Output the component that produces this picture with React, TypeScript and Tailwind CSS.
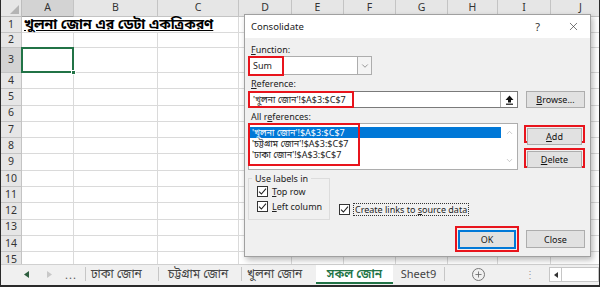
import { ChevronDown, ChevronUp, Plus, X } from 'lucide-react'

const FONT = "font-['Noto_Sans','Noto_Sans_Bengali','Lohit_Bengali','Vrinda',sans-serif]"

const COLS = [
  { name: 'A', w: 'w-[52px]' },
  { name: 'B', w: 'w-[84px]' },
  { name: 'C', w: 'w-[81px]' },
  { name: 'D', w: 'w-[53px]' },
  { name: 'E', w: 'w-[52px]' },
  { name: 'F', w: 'w-[52px]' },
  { name: 'G', w: 'w-[52px]' },
  { name: 'H', w: 'w-[50px]' },
  { name: 'I', w: 'w-[53px]' },
  { name: 'J', w: 'w-[60px]' },
]

const ROWS = [
  { n: 1, h: 'h-[16px]' },
  { n: 2, h: 'h-[15px]' },
  { n: 3, h: 'h-[25px]' },
  { n: 4, h: 'h-[16.3px]' },
  { n: 5, h: 'h-[16.3px]' },
  { n: 6, h: 'h-[16.3px]' },
  { n: 7, h: 'h-[16.3px]' },
  { n: 8, h: 'h-[16.3px]' },
  { n: 9, h: 'h-[16.3px]' },
  { n: 10, h: 'h-[16.3px]' },
  { n: 11, h: 'h-[16.3px]' },
  { n: 12, h: 'h-[16.3px]' },
  { n: 13, h: 'h-[16.3px]' },
  { n: 14, h: 'h-[16.3px]' },
  { n: 15, h: 'h-[16px]' },
]

const REFS = [
  "'খুলনা জোন'!$A$3:$C$7",
  "'চট্টগ্রাম জোন'!$A$3:$C$7",
  "'ঢাকা জোন'!$A$3:$C$7",
]

function Check() {
  return (
    <span className="w-[11px] h-[11px] border border-[#333] bg-white flex items-center justify-center shrink-0">
      <svg width="9" height="9" viewBox="0 0 9 9">
        <path d="M1 4.6 L3.4 7 L8 1.6" fill="none" stroke="#222" strokeWidth="1.1" />
      </svg>
    </span>
  )
}

function Btn({ children, className = '' }: { children: React.ReactNode; className?: string }) {
  return (
    <div className={`h-[17px] bg-[#e1e1e1] border border-[#adadad] flex items-center justify-center text-[#111] ${className}`}>
      {children}
    </div>
  )
}

function Sheet() {
  return (
    <div className="h-[264px] overflow-hidden bg-white">
      {/* column headers */}
      <div className="flex h-[17px]">
        <div className="w-[21px] shrink-0 bg-[#e6e6e6] border-r border-b border-[#bdbdbd] relative">
          <svg className="absolute right-[2px] bottom-[2px]" width="9" height="9" viewBox="0 0 9 9">
            <path d="M9 0 L9 9 L0 9 Z" fill="#b4b4b4" />
          </svg>
        </div>
        {COLS.map(c => (
          <div
            key={c.name}
            className={`${c.w} shrink-0 border-r border-b border-[#c4c4c4] flex items-center justify-center text-[10.5px] text-[#333] ${
              c.name === 'A' ? 'bg-[#d3d3d3] border-b-[#9c9c9c]' : 'bg-[#e6e6e6]'
            }`}
          >
            {c.name}
          </div>
        ))}
      </div>
      {ROWS.map(r => (
        <div key={r.n} className={`flex ${r.h}`}>
          <div
            className={`w-[21px] shrink-0 border-r border-b border-[#c4c4c4] flex items-center justify-center text-[10.5px] text-[#333] ${
              r.n === 3 ? 'bg-[#d3d3d3]' : 'bg-[#e6e6e6]'
            }`}
          >
            {r.n}
          </div>
          {COLS.map(c => {
            const hideRight = r.n === 1 && (c.name === 'A' || c.name === 'B')
            return (
              <div
                key={c.name}
                className={`${c.w} shrink-0 border-b border-[#dadada] relative ${hideRight ? '' : 'border-r'}`}
              >
                {r.n === 1 && c.name === 'A' && (
                  <span className="absolute left-[2px] top-[-2px] z-10 whitespace-nowrap text-[14px] font-bold underline text-black leading-[18px]">
                    খুলনা জোন এর ডেটা একত্রিকরণ
                  </span>
                )}
                {r.n === 3 && c.name === 'A' && (
                  <div className="absolute left-[-1px] top-[-1px] right-[-1px] bottom-[-1px] border-2 border-[#217346] z-10">
                    <span className="absolute right-[-4px] bottom-[-4px] w-[5px] h-[5px] bg-[#217346] border border-white" />
                  </div>
                )}
              </div>
            )
          })}
        </div>
      ))}
    </div>
  )
}

function Tabs() {
  const sep = <span className="w-px h-[14px] bg-[#c6c6c6] shrink-0" />
  return (
    <div className="h-[21px] bg-[#f0f0f0] border-t border-[#d0d0d0] flex items-start text-[12px] text-[#444]">
      <div className="w-[84px] h-[18px] flex items-center shrink-0">
        <svg className="ml-[23px]" width="5" height="7" viewBox="0 0 5 7">
          <path d="M5 0 L0 3.5 L5 7 Z" fill="#2e5e3f" />
        </svg>
        <svg className="ml-[18px]" width="5" height="7" viewBox="0 0 5 7">
          <path d="M0 0 L5 3.5 L0 7 Z" fill="#c8c8c8" />
        </svg>
        <span className="ml-[13px] text-[11px] text-[#555] leading-none tracking-[1px]">...</span>
      </div>
      <div className="h-[18px] flex items-center">{sep}</div>
      <div className="w-[72px] h-[18px] flex items-center pl-[5px] shrink-0">ঢাকা জোন</div>
      <div className="h-[18px] flex items-center">{sep}</div>
      <div className="w-[82px] h-[18px] flex items-center pl-[9px] shrink-0 whitespace-nowrap">চট্টগ্রাম জোন</div>
      <div className="h-[18px] flex items-center">{sep}</div>
      <div className="w-[74px] h-[18px] flex items-center pl-[5px] shrink-0">খুলনা জোন</div>
      <div className="w-[77px] h-[19px] bg-white border-b-2 border-[#217346] flex items-center justify-center shrink-0 text-[#217346] font-semibold">
        সকল জোন
      </div>
      <div className="w-[51px] h-[18px] flex items-center justify-center shrink-0 text-[11px]">Sheet9</div>
      <div className="h-[18px] flex items-center">{sep}</div>
      <div className="w-[66px] h-[18px] flex items-center justify-center shrink-0">
        <span className="w-[13px] h-[13px] rounded-full border border-[#777] flex items-center justify-center">
          <Plus size={9} strokeWidth={2.2} className="text-[#666]" />
        </span>
      </div>
      <div className="w-[38px] h-[18px] flex items-center justify-center shrink-0 text-[#999] text-[10px] leading-none">⋮</div>
      <div className="flex-1 h-[15px] mt-[2px] bg-white border border-[#c6c6c6] flex">
        <div className="w-[12px] h-full border-r border-[#c6c6c6] flex items-center justify-center">
          <svg width="4" height="6" viewBox="0 0 4 6">
            <path d="M4 0 L0 3 L4 6 Z" fill="#333" />
          </svg>
        </div>
      </div>
    </div>
  )
}

function Dialog() {
  return (
    <div className="absolute left-[243px] top-[14px] w-[347px] h-[243px] bg-[#f0f0f0] border border-[#a0a0a0] shadow-[2px_3px_6px_rgba(0,0,0,0.28)] text-[9px] text-[#222] leading-[11px]">
      {/* title bar */}
      <div className="h-[23px] bg-white flex items-center pl-[6px] pr-[10px]">
        <span className="text-[9.5px] text-[#222]">Consolidate</span>
        <span className="ml-auto text-[11px] text-[#333]">?</span>
        <X size={13} strokeWidth={1.2} className="ml-[27px] text-[#333]" />
      </div>

      <div className="pl-[3px] pr-[5px]">
        <div className="h-[18px] flex items-end pl-[3px] pb-[1px]">
          <span><u>F</u>unction:</span>
        </div>

        <div className="relative w-[124px] h-[19px] bg-white border border-[#adadad] flex items-center">
          <span className="pl-[4px]">Sum</span>
          <div className="ml-auto w-[14px] h-full border-l border-[#adadad] bg-[#f4f4f4] flex items-center justify-center">
            <ChevronDown size={10} strokeWidth={1.4} className="text-[#555]" />
          </div>
          <div className="absolute left-[-1px] top-[-1px] w-[36px] h-[20px] border-2 border-[#e8141c]" />
        </div>

        <div className="h-[16px] flex items-center pl-[3px]">
          <span><u>R</u>eference:</span>
        </div>

        <div className="flex items-center">
          <div className="relative w-[270px] h-[17px] bg-white border border-[#7a7a7a] flex items-center">
            <span className="pl-[4px] whitespace-nowrap">{REFS[0]}</span>
            <div className="ml-auto w-[17px] h-full border-l border-[#adadad] flex items-center justify-center">
              <svg width="9" height="10" viewBox="0 0 9 10">
                <path d="M4.5 0.5 L8.5 5 L6 5 L6 7.5 L3 7.5 L3 5 L0.5 5 Z" fill="#111" />
                <rect x="1" y="8.6" width="7" height="1.2" fill="#111" />
              </svg>
            </div>
            <div className="absolute left-[-1px] top-[-1px] w-[106px] h-[17px] border-2 border-[#e8141c]" />
          </div>
          <Btn className="ml-[8px] w-[59px]">
            <span><u>B</u>rowse...</span>
          </Btn>
        </div>

        <div className="h-[15px] flex items-end pl-[3px] pb-[1px]">
          <span>All r<u>e</u>ferences:</span>
        </div>

        <div className="flex items-start">
          <div className="relative w-[270px] h-[47px] bg-white border border-[#adadad] flex">
            <div className="flex-1 pt-[3px] flex flex-col">
              <div className="h-[11px] bg-[#0078d7] text-white flex items-center pl-[3px] whitespace-nowrap">{REFS[0]}</div>
              <div className="h-[11px] flex items-center pl-[3px] whitespace-nowrap">{REFS[1]}</div>
              <div className="h-[11px] flex items-center pl-[3px] whitespace-nowrap">{REFS[2]}</div>
            </div>
            <div className="w-[16px] flex flex-col items-center justify-between py-[4px]">
              <ChevronUp size={9} strokeWidth={1.4} className="text-[#9a9a9a]" />
              <ChevronDown size={9} strokeWidth={1.4} className="text-[#9a9a9a]" />
            </div>
            <div className="absolute left-[-1px] top-[-1px] w-[112px] h-[43px] border-2 border-[#e8141c]" />
          </div>
          <div className="ml-[6px] flex flex-col gap-[5px] pt-[2px]">
            <div className="w-[61px] h-[18px] border-2 border-[#e8141c] p-px">
              <Btn className="h-[14px] w-full"><span><u>A</u>dd</span></Btn>
            </div>
            <div className="w-[61px] h-[20px] border-2 border-[#e8141c] p-px">
              <Btn className="h-[16px] w-full"><span><u>D</u>elete</span></Btn>
            </div>
          </div>
        </div>

        <div className="flex items-end mt-[2px]">
          <div className="relative w-[82px] h-[42px] mt-[6px] border border-[#dcdcdc] pl-[8px] pt-[7px] flex flex-col gap-[4px]">
            <span className="absolute left-[3px] top-[-6px] bg-[#f0f0f0] px-[3px]">Use labels in</span>
            <div className="flex items-center gap-[4px]">
              <Check />
              <span><u>T</u>op row</span>
            </div>
            <div className="flex items-center gap-[4px]">
              <Check />
              <span><u>L</u>eft column</span>
            </div>
          </div>
          <div className="ml-[9px] mb-[4px] flex items-center gap-[3px]">
            <Check />
            <span className="border border-dotted border-[#333] px-px">Create links to <u>s</u>ource data</span>
          </div>
        </div>

        <div className="flex justify-end items-center mt-[6px]">
          <div className="w-[64px] h-[26px] border-2 border-[#e8141c] flex items-center justify-center">
            <div className="w-[58px] h-[19px] bg-[#e1e1e1] border-2 border-[#0078d7] flex items-center justify-center">OK</div>
          </div>
          <Btn className="ml-[7px] w-[59px] h-[18px]">Close</Btn>
        </div>
      </div>
    </div>
  )
}

export default function App() {
  return (
    <div className={`relative w-[600px] h-[287px] overflow-hidden bg-white border-x border-b-2 border-[#2a2a2a] ${FONT}`}>
      <Sheet />
      <Tabs />
      <Dialog />
    </div>
  )
}
